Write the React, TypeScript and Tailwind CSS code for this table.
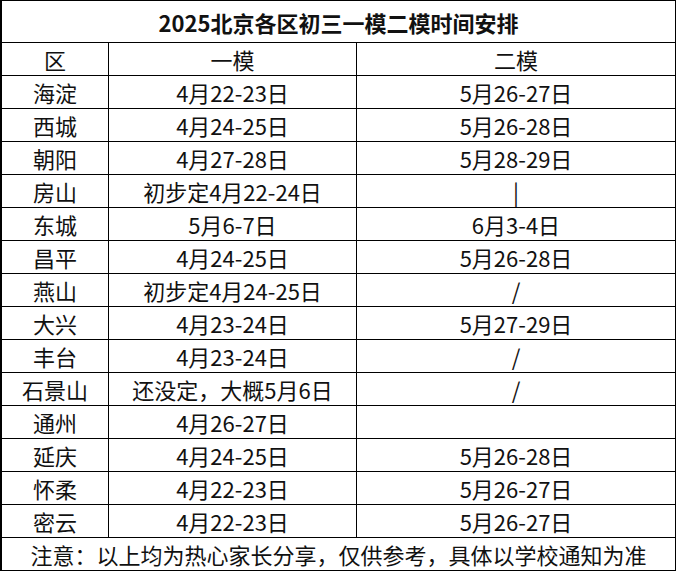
const rows: [string, string, string][] = [
  ["海淀", "4月22-23日", "5月26-27日"],
  ["西城", "4月24-25日", "5月26-28日"],
  ["朝阳", "4月27-28日", "5月28-29日"],
  ["房山", "初步定4月22-24日", "|"],
  ["东城", "5月6-7日", "6月3-4日"],
  ["昌平", "4月24-25日", "5月26-28日"],
  ["燕山", "初步定4月24-25日", "/"],
  ["大兴", "4月23-24日", "5月27-29日"],
  ["丰台", "4月23-24日", "/"],
  ["石景山", "还没定，大概5月6日", "/"],
  ["通州", "4月26-27日", ""],
  ["延庆", "4月24-25日", "5月26-28日"],
  ["怀柔", "4月22-23日", "5月26-27日"],
  ["密云", "4月22-23日", "5月26-27日"],
];

function Row({ cells }: { cells: [string, string, string] }) {
  return (
    <div className="flex h-[33px] border-b border-black">
      <div className="flex w-[107px] shrink-0 items-center justify-center border-r border-black">{cells[0]}</div>
      <div className="flex w-[248px] shrink-0 items-center justify-center border-r border-black">{cells[1]}</div>
      <div className="flex flex-1 items-center justify-center">{cells[2]}</div>
    </div>
  );
}

export default function App() {
  return (
    <div className="h-[571px] w-[680px] bg-white">
      <div
        className="w-[676px] border-t border-r border-l-2 border-black text-[22px] leading-none text-[#111]"
        style={{ fontFamily: '"Noto Sans CJK SC", "Noto Sans", sans-serif' }}
      >
        <div className="flex h-[42px] items-center justify-center border-b border-black font-bold">
          2025北京各区初三一模二模时间安排
        </div>
        <Row cells={["区", "一模", "二模"]} />
        {rows.map((r) => (
          <Row key={r[0]} cells={r} />
        ))}
        <div className="flex h-[33px] items-center justify-center border-b border-black">
          注意：以上均为热心家长分享，仅供参考，具体以学校通知为准
        </div>
      </div>
    </div>
  );
}
